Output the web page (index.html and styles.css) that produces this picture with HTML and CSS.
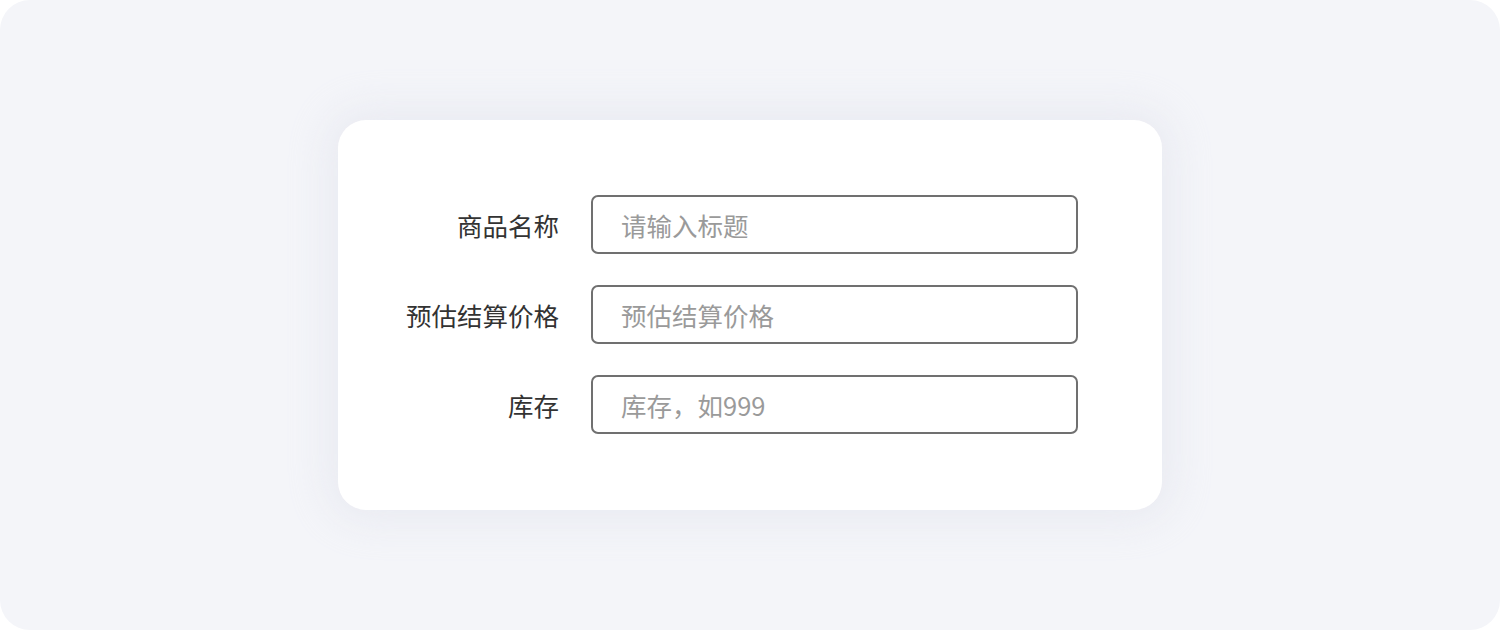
FILE: index.html
```html
<!DOCTYPE html>
<html lang="zh-CN">
<head>
<meta charset="utf-8">
<link rel="stylesheet" href="styles.css">
</head>
<body>
<div class="page">
  <form class="card">
    <label class="label" for="f1">商品名称</label>
    <input class="field" id="f1" type="text" placeholder="请输入标题">
    <label class="label" for="f2">预估结算价格</label>
    <input class="field" id="f2" type="text" placeholder="预估结算价格">
    <label class="label" for="f3">库存</label>
    <input class="field" id="f3" type="text" placeholder="库存，如999">
  </form>
</div>
</body>
</html>
```
FILE: styles.css
```css
html, body {
  margin: 0;
  padding: 0;
  background: #ffffff;
}
.page {
  width: 1500px;
  height: 630px;
  background: #f4f5f9;
  border-radius: 30px;
  display: flex;
  align-items: center;
  justify-content: center;
  font-family: "Noto Sans CJK SC", "Noto Sans", sans-serif;
}
.card {
  box-sizing: border-box;
  width: 824px;
  height: 390px;
  background: #ffffff;
  border-radius: 28px;
  box-shadow: 0 0 40px 10px rgba(220, 222, 232, 0.45);
  padding: 75px 84px 0 0;
  display: grid;
  grid-template-columns: 221px 487px;
  grid-auto-rows: 59px;
  column-gap: 32px;
  row-gap: 31px;
  align-content: start;
}
.label {
  justify-self: end;
  align-self: center;
  font-size: 25.5px;
  color: #333333;
  line-height: 1;
}
.field {
  box-sizing: border-box;
  width: 100%;
  height: 59px;
  margin: 0;
  border: 2px solid #707070;
  border-radius: 7px;
  padding: 0 28px;
  font-family: "Noto Sans CJK SC", "Noto Sans", sans-serif;
  font-size: 25.5px;
  color: #333333;
  background: #ffffff;
  outline: none;
}
.field::placeholder {
  color: #9a9a9a;
}
```
